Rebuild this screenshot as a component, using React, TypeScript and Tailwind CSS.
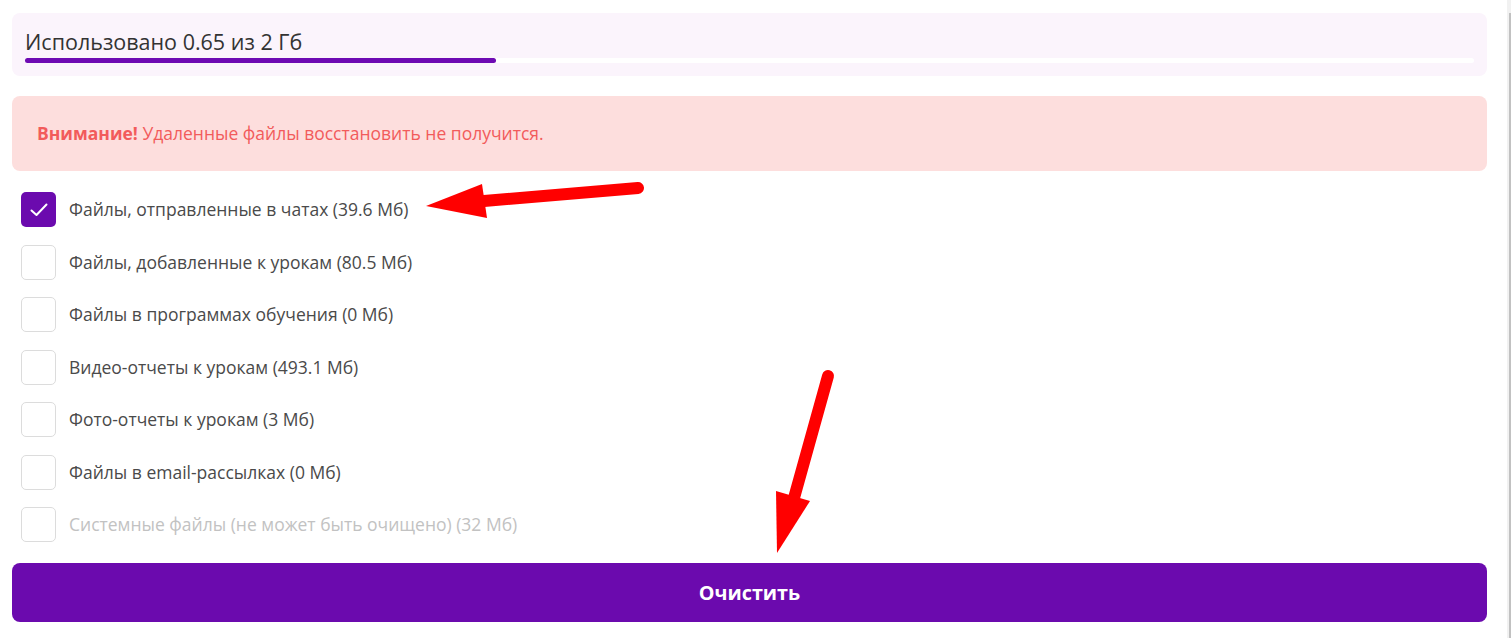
import React from "react";

const items = [
  { label: "Файлы, отправленные в чатах (39.6 Мб)", checked: true },
  { label: "Файлы, добавленные к урокам (80.5 Мб)" },
  { label: "Файлы в программах обучения (0 Мб)" },
  { label: "Видео-отчеты к урокам (493.1 Мб)" },
  { label: "Фото-отчеты к урокам (3 Мб)" },
  { label: "Файлы в email-рассылках (0 Мб)" },
  { label: "Системные файлы (не может быть очищено) (32 Мб)", disabled: true },
];

export default function App() {
  return (
    <div
      className="relative flex w-[1511px] h-[638px] overflow-hidden bg-white"
      style={{ fontFamily: '"Open Sans", "Noto Sans", sans-serif' }}
    >
      <div className="flex-1 flex flex-col pl-[12px] pr-[20px] pt-[13px]">
        <div className="rounded-[8px] bg-[#fbf4fc] h-[63px] px-[13px] pt-[14px] flex flex-col">
          <div className="text-[21.5px] leading-[29px] text-[#333333]">Использовано 0.65 из 2 Гб</div>
          <div className="mt-[2px] h-[5px] rounded-full bg-white">
            <div className="h-[5px] rounded-full bg-[#6e0ab3]" style={{ width: "32.5%" }} />
          </div>
        </div>

        <div className="mt-[20px] h-[75px] rounded-[8px] bg-[#fddedd] flex items-center px-[25px] text-[17.5px] text-[#f25b5b]">
          <span>
            <b className="font-bold">Внимание!</b> Удаленные файлы восстановить не получится.
          </span>
        </div>

        <div className="mt-[21px] pl-[9px] flex flex-col gap-[17.5px]">
          {items.map((it, i) => (
            <div key={i} className="flex items-center h-[35px]">
              {it.checked ? (
                <div className="w-[35px] h-[35px] rounded-[5px] bg-[#6b0aae] flex items-center justify-center">
                  <svg width="18" height="14" viewBox="0 0 18 14" fill="none">
                    <path d="M1.5 7.5L6.5 12L16.5 1.5" stroke="white" strokeWidth="2" strokeLinecap="round" strokeLinejoin="round" />
                  </svg>
                </div>
              ) : (
                <div className="w-[35px] h-[35px] rounded-[5px] border border-[#dcdcdc] bg-white" />
              )}
              <span
                className={
                  "ml-[13px] text-[17.5px] " + (it.disabled ? "text-[#c2c2c2]" : "text-[#4a4a4a]")
                }
              >
                {it.label}
              </span>
            </div>
          ))}
        </div>

        <button className="mt-[21px] h-[59px] rounded-[8px] bg-[#6b0aae] text-white text-[19.8px] font-bold flex items-center justify-center">
          Очистить
        </button>
      </div>

      <div className="w-[4px] h-full bg-[#f1f1f1] flex flex-col">
        <div className="mt-[13px] ml-[2px] flex-1 bg-[#c1c1c1]" />
      </div>

      <svg className="absolute left-0 top-0 pointer-events-none" width="1511" height="638">
        <line x1="638" y1="188" x2="484" y2="201" stroke="#ff0000" strokeWidth="12" strokeLinecap="round" />
        <polygon points="426,206 482,184 487,218" fill="#ff0000" />
        <line x1="828" y1="376" x2="794" y2="498" stroke="#ff0000" strokeWidth="12" strokeLinecap="round" />
        <polygon points="777,553 776,491 810,501" fill="#ff0000" />
      </svg>
    </div>
  );
}
